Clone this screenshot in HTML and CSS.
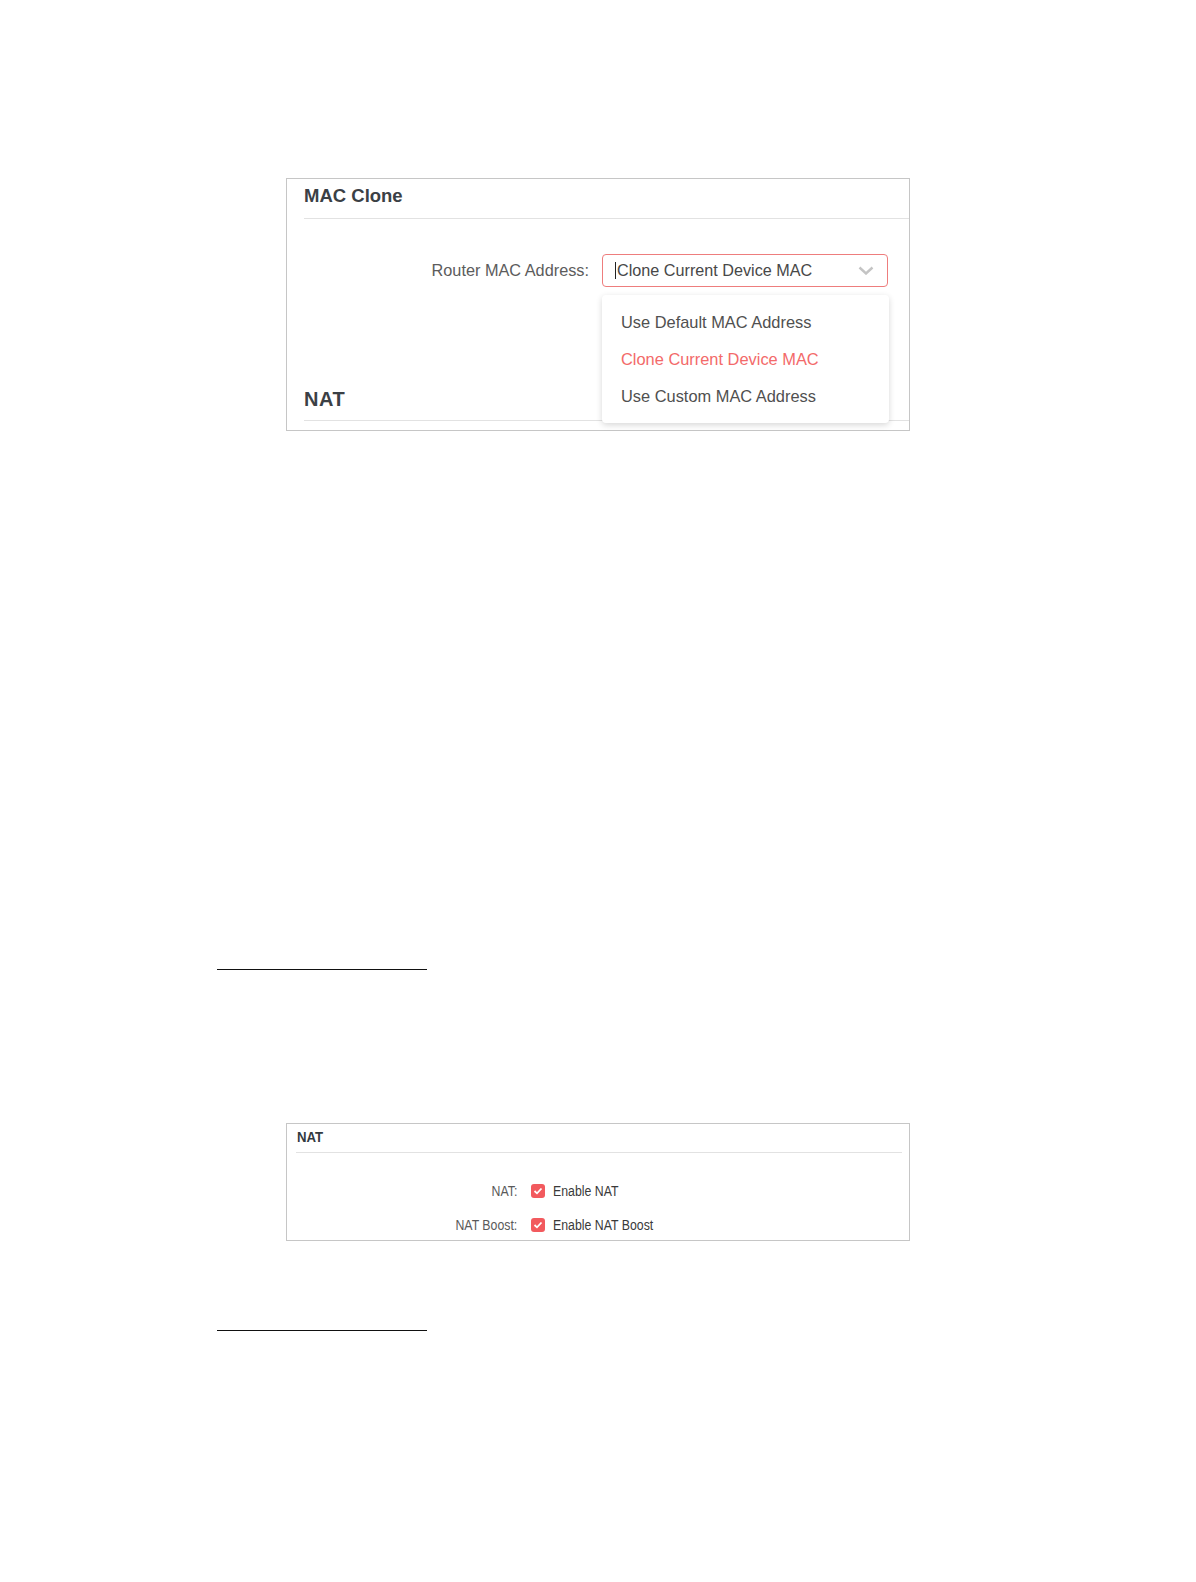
FILE: index.html
```html
<!DOCTYPE html>
<html>
<head>
    <title>MAC Clone and NAT</title>
    <link rel="stylesheet" href="styles.css">
</head>
<body>
    <div class="shot shot-mac">
        <h2 class="panel-title">MAC Clone</h2>
        <div class="field-row">
            <label class="field-label">Router MAC Address:</label>
            <div class="select-wrap">
                <div class="select-box">
                    <span class="caret"></span>Clone Current Device MAC
                    <svg class="chevron" width="16" height="9" viewBox="0 0 16 9">
                        <path d="M1.5 1.5 L8 7.5 L14.5 1.5" fill="none" stroke="#c4c4c4" stroke-width="2.4"/>
                    </svg>
                </div>
                <ul class="select-menu">
                    <li>Use Default MAC Address</li>
                    <li class="active">Clone Current Device MAC</li>
                    <li>Use Custom MAC Address</li>
                </ul>
            </div>
        </div>
        <h2 class="panel-title nat-title">NAT</h2>
    </div>

    <div class="rule rule-first"></div>

    <div class="shot shot-nat">
        <h3 class="small-title"><span class="squeeze">NAT</span></h3>
        <div class="check-row">
            <span class="check-label"><span class="squeeze right">NAT:</span></span>
            <span class="checkbox">
                <svg width="10" height="8" viewBox="0 0 10 8">
                    <path d="M1.5 4 L4 6.3 L8.5 1.5" fill="none" stroke="#fff" stroke-width="1.8"/>
                </svg>
            </span>
            <span class="check-text"><span class="squeeze">Enable NAT</span></span>
        </div>
        <div class="check-row">
            <span class="check-label"><span class="squeeze right">NAT Boost:</span></span>
            <span class="checkbox">
                <svg width="10" height="8" viewBox="0 0 10 8">
                    <path d="M1.5 4 L4 6.3 L8.5 1.5" fill="none" stroke="#fff" stroke-width="1.8"/>
                </svg>
            </span>
            <span class="check-text"><span class="squeeze">Enable NAT Boost</span></span>
        </div>
    </div>

    <div class="rule rule-second"></div>
</body>
</html>
```

FILE: styles.css
```css
html {
    background-color: #fff;
}

body {
    margin: 0;
    height: 1582px;
    font-family: "Liberation Sans", Arial, sans-serif;
    background-color: #fff;
}

.shot {
    box-sizing: border-box;
    width: 624px;
    margin-left: 286px;
    border: 1px solid #c6c6c6;
    background-color: #fff;
}

/* MAC clone screenshot */

.shot-mac {
    margin-top: 178px;
    height: 253px;
    padding-left: 17px;
}

.panel-title {
    margin: 0;
    padding: 5px 0 10px;
    font-size: 18.5px;
    line-height: 24px;
    font-weight: bold;
    color: #3b4045;
    border-bottom: 1px solid #e2e2e2;
}

.nat-title {
    margin-top: 95px;
    padding-bottom: 9px;
    font-size: 20px;
    letter-spacing: 0.5px;
}

.field-row {
    display: flex;
    align-items: center;
    margin-top: 35px;
}

.field-label {
    width: 285px;
    margin-right: 13px;
    text-align: right;
    font-size: 16.3px;
    color: #5c5c5c;
}

.select-wrap {
    position: relative;
    width: 286px;
}

.select-box {
    box-sizing: border-box;
    display: flex;
    align-items: center;
    height: 33px;
    padding-left: 12px;
    border: 1px solid #ee7d7d;
    border-radius: 4px;
    font-size: 16.2px;
    color: #484848;
}

.caret {
    display: inline-block;
    width: 1px;
    height: 17px;
    margin-right: 1px;
    background-color: #222;
}

.chevron {
    margin-left: auto;
    margin-right: 13px;
}

.select-menu {
    position: absolute;
    top: 41px;
    left: 0;
    width: 287px;
    box-sizing: border-box;
    margin: 0;
    padding: 9px 0 8px 19px;
    list-style: none;
    background-color: #fff;
    border-radius: 4px;
    box-shadow: 0 2px 6px rgba(0, 0, 0, 0.16);
    font-size: 16.4px;
    line-height: 37px;
    color: #505050;
}

.select-menu .active {
    color: #f36a6a;
}

/* separators */

.rule {
    width: 210px;
    height: 1px;
    margin-left: 217px;
    background-color: #111;
}

.rule-first {
    margin-top: 538px;
}

.rule-second {
    margin-top: 89px;
}

/* NAT screenshot */

.shot-nat {
    margin-top: 153px;
    height: 118px;
    overflow: hidden;
}

.small-title {
    margin: 0 7px 0 9px;
    padding: 3px 0 5px 1px;
    font-size: 15px;
    line-height: 20px;
    font-weight: bold;
    color: #333a40;
    border-bottom: 1px solid #e2e2e2;
}

.check-row {
    display: flex;
    align-items: center;
    height: 34px;
    font-size: 14px;
}

.check-row:first-of-type {
    margin-top: 21px;
}

.check-label {
    width: 230px;
    margin-right: 14px;
    text-align: right;
    color: #5a5a5a;
}

.checkbox {
    display: flex;
    align-items: center;
    justify-content: center;
    width: 14px;
    height: 14px;
    margin-right: 8px;
    border-radius: 3px;
    background-color: #f25a5e;
}

.check-text {
    color: #3a3a3a;
}

.squeeze {
    display: inline-block;
    transform: scaleX(0.88);
    transform-origin: left center;
}

.squeeze.right {
    transform-origin: right center;
}
```
